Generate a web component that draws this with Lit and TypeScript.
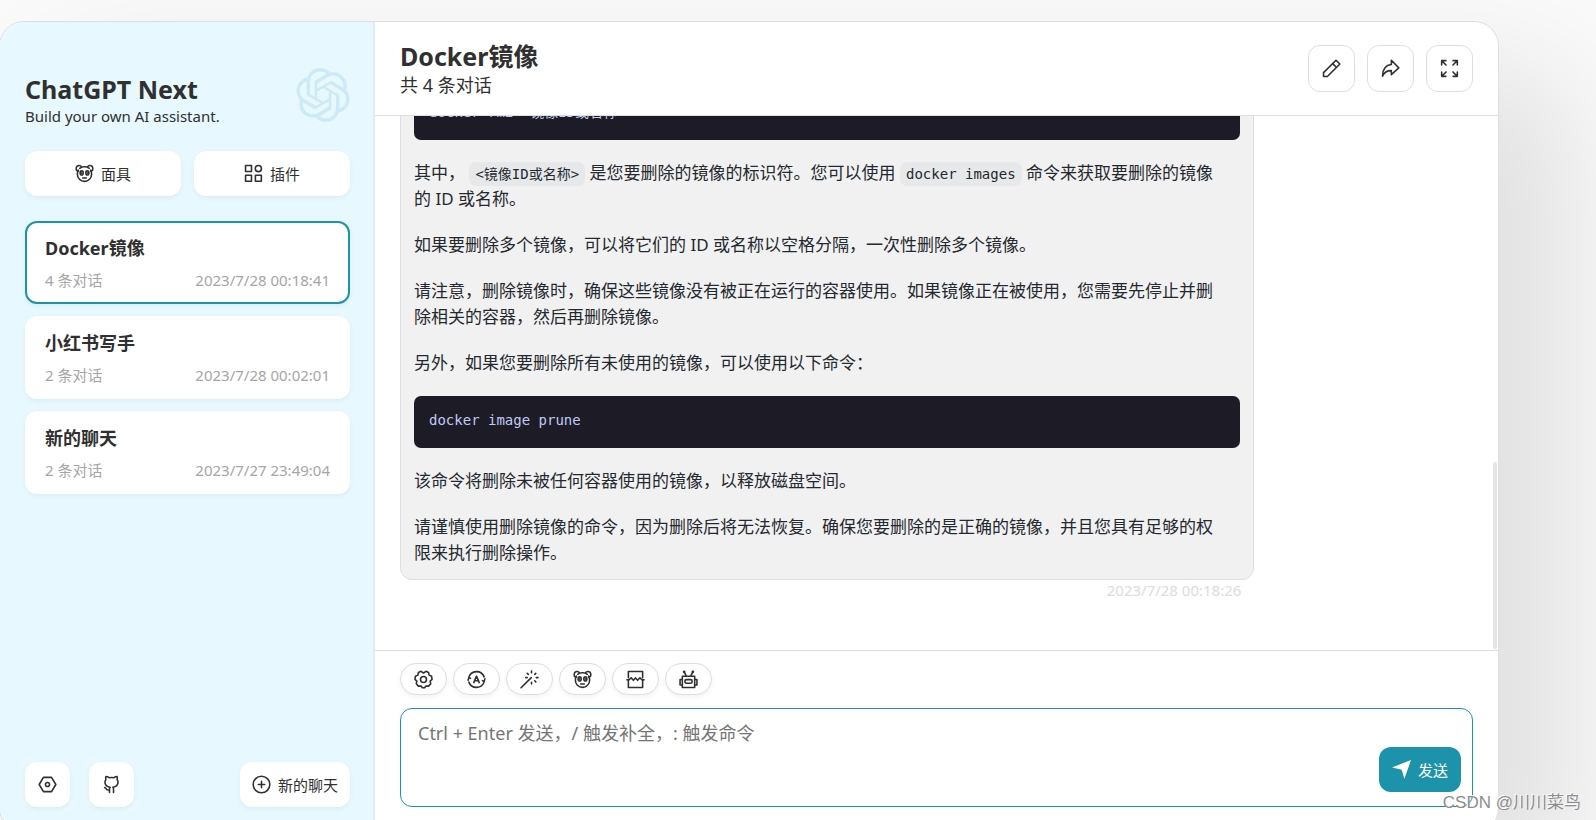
import { LitElement, html, css, svg } from "lit";
import { customElement, property } from "lit/decorators.js";
import { classMap } from "lit/directives/class-map.js";

const icons: Record<string, unknown> = {
  panda: svg`<path d="M4 3.6A5.9 5.9 0 0 1 8 2.300a5.900 5.900 0 0 1 4 1.300M2.900 5.200A6 6 0 0 0 2 8.600a6 6 0 0 0 12 0 6 6 0 0 0-.9-3.400"/><path d="M2.600 6A2.200 2.200 0 0 1 1 3.500C1.100 2 2.200 1.100 3.500 1.200c1 .1 1.600.6 2 1.300M13.400 6A2.200 2.200 0 0 0 15 3.500C14.900 2 13.800 1.100 12.500 1.200c-1 .1-1.600.6-2 1.300"/><ellipse cx="5.600" cy="7.500" rx="1.300" ry="1.700"/><ellipse cx="10.400" cy="7.500" rx="1.300" ry="1.700"/><path d="M5.700 7.500v.3M10.300 7.500v.3M6.500 11.800h3"/>`,
  plugins: svg`<rect x="1.300" y="1.300" width="5" height="5"/><circle cx="12.100" cy="3.800" r="2.600"/><rect x="1.300" y="9.500" width="5" height="5"/><rect x="9.600" y="9.500" width="5" height="5"/>`,
  settings: svg`<path d="M4.600 2h6.800L15 8l-3.600 6H4.600L1 8z"/><circle cx="8" cy="8" r="1.700"/>`,
  github: svg`<path d="M6.300 14.700v-3.100c0-.5.200-1 .6-1.300C4.300 10 2.500 8.900 2.500 6.200c0-1 .3-1.800.8-2.400-.3-.9-.3-1.700 0-2.500 1 0 1.900.4 2.700 1 1.300-.2 2.700-.2 4 0 .8-.6 1.700-1 2.700-1 .3.8.3 1.600 0 2.500.5.6.8 1.400.8 2.400 0 2.700-1.800 3.800-4.400 4.100.4.300.6.800.6 1.300v3.100M6.300 12.600c-2.300.4-2.300-.3-2.800-1.100-.3-.5-.8-.8-1.300-1"/>`,
  add: svg`<circle cx="8" cy="8" r="7"/><path d="M8 5.300v5.400M5.300 8h5.400"/>`,
  edit: svg`<path d="M1.300 14.700h3.200L15 4.200 11.800 1 1.300 11.500z"/><path d="m9 3.900 3.100 3.100"/>`,
  share: svg`<path d="M8.700 1 15 7.500 8.700 13.200v-3.400c-3.500-.2-5.700 1-7.400 4.600.1-5.400 2.200-9.200 7.400-9.700z"/>`,
  full: svg`<path d="M1.400 5V1.400H5M1.700 1.700l3.400 3.400M11 1.400h3.600V5M14.300 1.700l-3.400 3.400M14.600 11v3.600H11M14.300 14.300l-3.400-3.400M5 14.600H1.400V11M1.700 14.300l3.400-3.400"/>`,
  gear: svg`<path d="M5.900 1.100 8 2.500l2.100-1.400 2.200 1 .4 2.200 2.100.9.400 2.700L13.600 9.300l.5 2.300-1.800 2-2.200-.2-1.200 1.600H7.100l-1.200-1.600-2.200.2-1.800-2 .5-2.300L.8 7.900l.4-2.700 2.100-.9.400-2.200z"/><circle cx="8" cy="8" r="2.500"/>`,
  auto: svg`<path d="M1.500 6.200A6.800 6.800 0 0 1 14.400 5.800M14.500 9.800A6.800 6.800 0 0 1 1.600 10.200M.9 8.600l.7-2.400 1.400.9M15.100 7.400l-.7 2.400-1.400-.9"/><path d="m5.700 10.600L8 5.200l2.300 5.400M6.500 9h3"/>`,
  wand: svg`<path d="m.9 15 8.600-8.600"/><path d="M9.700.9v1.500M9.700 10.300v1.500M13.700 6.400h1.500M4.800 6.400h1.300M6.100 2.800l.9.900M12.400 9.100l.9.900M12.400 3.700l.9-.9"/>`,
  divide: svg`<path d="M2 6.500V1.300h12v5.200M2 9.500v5.200h12V9.500M.8 8.300h1.700l1.800-1.800L6.200 8.700 8 6.700l1.800 2 1.900-2.200 1.800 1.800h1.700"/>`,
  robot: svg`<rect x="2.800" y="5.300" width="10.400" height="9.400"/><rect x="5" y="8.100" width="6" height="3" rx="1.200"/><path d="M2.800 8H.9v4.600h1.900M13.200 8h1.900v4.600h-1.900M6.200 5.300 4.300 1.400M9.800 5.300l1.900-3.900"/><circle cx="4.300" cy="1.500" r=".5"/><circle cx="11.700" cy="1.500" r=".5"/>`,
  send: svg`<path class="solid" d="M0 6.300 16 0 10.400 16 8.200 8.200z"/>`,
};

@customElement("app-icon")
class AppIcon extends LitElement {
  @property() name = "";
  static styles = css`
    :host {
      display: block;
      width: 19px;
      height: 19px;
      flex: none;
    }
    .glyph {
      display: block;
      width: 100%;
      height: 100%;
      fill: none;
      stroke: currentColor;
      stroke-width: 1.33;
      stroke-linejoin: round;
      stroke-linecap: round;
    }
    .solid {
      fill: currentColor;
      stroke: none;
    }
  `;
  render() {
    return html`<svg class="glyph" viewBox="0 0 16 16" aria-hidden="true">${icons[this.name]}</svg>`;
  }
}

interface Chat {
  title: string;
  count: number;
  time: string;
  active?: boolean;
}

const chats: Chat[] = [
  { title: "Docker镜像", count: 4, time: "2023/7/28 00:18:41", active: true },
  { title: "小红书写手", count: 2, time: "2023/7/28 00:02:01" },
  { title: "新的聊天", count: 2, time: "2023/7/27 23:49:04" },
];

const tools = [
  ["gear", "对话设置"],
  ["auto", "自动主题"],
  ["wand", "快捷指令"],
  ["panda", "所有面具"],
  ["divide", "清除聊天"],
  ["robot", "模型"],
];

const headerActions = [
  ["edit", "编辑"],
  ["share", "分享"],
  ["full", "全屏"],
];

@customElement("app-root")
class AppRoot extends LitElement {
  static styles = css`
    :host {
      display: block;
      height: 100vh;
      overflow: hidden;
      position: relative;
      background: #fafafa;
      color: #303030;
      font-family: "Noto Sans", "Noto Sans CJK SC", sans-serif;
      font-size: 15px;
      line-height: 20px;
    }
    * {
      box-sizing: border-box;
    }
    button,
    textarea {
      font: inherit;
      color: inherit;
      margin: 0;
    }
    h1,
    h2,
    p,
    pre {
      margin: 0;
    }
    .window {
      display: grid;
      grid-template-columns: 375px minmax(0, 1fr);
      grid-template-rows: minmax(0, 1fr);
      height: calc(100vh - 8px);
      margin: 21px 97px 0 -1px;
      border: 1px solid #dedede;
      border-radius: 25px;
      overflow: hidden;
      background: #fff;
      box-shadow: 62px 62px 125px 12px rgba(0, 0, 0, 0.1);
    }
    .sidebar {
      display: flex;
      flex-direction: column;
      gap: 25px;
      padding: 25px;
      background: #e7f8ff;
      box-shadow: inset -2px 0 2px 0 rgba(0, 0, 0, 0.05);
    }
    .brand {
      display: flex;
      justify-content: space-between;
      padding-top: 25px;
    }
    .heading {
      font-size: 25px;
      line-height: 34px;
      font-weight: 700;
    }
    .logo {
      width: 54px;
      height: 54px;
      margin-top: -4px;
      fill: #ccebf6;
    }
    .button {
      display: flex;
      align-items: center;
      justify-content: center;
      gap: 7px;
      height: 45px;
      padding: 0 12px;
      border: 0;
      border-radius: 12px;
      background: #fff;
      box-shadow: 0 2px 5px rgba(0, 0, 0, 0.05);
    }
    .shortcuts {
      display: grid;
      grid-template-columns: 1fr 1fr;
      gap: 13px;
    }
    .chats {
      display: flex;
      flex-direction: column;
      gap: 12px;
      flex: 1;
    }
    .chat {
      display: flex;
      flex-direction: column;
      gap: 9px;
      padding: 12px 18px;
      border: 2px solid transparent;
      border-radius: 12px;
      background: #fff;
      box-shadow: 0 2px 5px rgba(0, 0, 0, 0.05);
      text-align: left;
    }
    .chat.active {
      border-color: #1d93ab;
    }
    .name {
      font-size: 18px;
      line-height: 26px;
      font-weight: 700;
    }
    .info {
      display: flex;
      justify-content: space-between;
      color: #a6a6a6;
    }
    .tail {
      display: flex;
      gap: 19px;
    }
    .square {
      width: 45px;
      color: inherit;
    }
    .new {
      margin-left: auto;
    }
    .main {
      display: flex;
      flex-direction: column;
      min-width: 0;
      min-height: 0;
    }
    .top {
      display: flex;
      align-items: center;
      justify-content: space-between;
      padding: 17px 25px;
      border-bottom: 1px solid #dedede;
    }
    .sub {
      font-size: 18px;
      line-height: 25px;
    }
    .actions {
      display: flex;
      gap: 12px;
    }
    .outlined {
      width: 47px;
      height: 47px;
      border: 1px solid #dedede;
      box-shadow: none;
    }
    .body {
      position: relative;
      flex: 1;
      min-height: 0;
      display: flex;
      flex-direction: column;
      justify-content: flex-end;
      overflow: hidden;
      padding: 0 30px 50px 25px;
    }
    .thumb {
      position: absolute;
      right: 1px;
      bottom: 1px;
      width: 4px;
      height: 35%;
      border-radius: 2px;
      background: #e5e5e5;
    }
    .message {
      width: 80%;
      flex: none;
      display: flex;
      flex-direction: column;
    }
    .bubble {
      display: flex;
      flex-direction: column;
      gap: 20px;
      padding: 13px;
      border: 1px solid #dedede;
      border-radius: 12px;
      background: #f1f1f1;
      color: #24292f;
      font-size: 17px;
      line-height: 26px;
    }
    .bubble p {
      padding-right: 16px;
    }
    .block {
      padding: 12px 15px 15px;
      border-radius: 7px;
      background: #1c1b26;
      color: #c0caf5;
      font-family: "DejaVu Sans Mono", "Noto Sans CJK SC", monospace;
      font-size: 14px;
      line-height: 25px;
    }
    .block code {
      font: inherit;
    }
    .inline {
      padding: 4px 6px;
      border-radius: 7px;
      background: #e6e8ea;
      font-family: "DejaVu Sans Mono", "Noto Sans CJK SC", monospace;
      font-size: 14px;
      line-height: 17px;
    }
    .date {
      align-self: flex-end;
      padding-right: 13px;
      color: #dcdcdc;
    }
    .panel {
      display: flex;
      flex-direction: column;
      gap: 13px;
      padding: 12px 25px 25px;
      border-top: 1px solid #dedede;
    }
    .tools {
      display: flex;
      gap: 6px;
    }
    .pill {
      width: 47px;
      height: 32px;
      border: 1px solid #dedede;
      border-radius: 16px;
    }
    .composer {
      position: relative;
      display: grid;
    }
    .input {
      height: 99px;
      padding: 12px 112px 12px 17px;
      border: 1px solid #1d93ab;
      border-radius: 12px;
      background: #fff;
      resize: none;
      outline: none;
      font-size: 18px;
      line-height: 25px;
      box-shadow: 0 -2px 5px rgba(0, 0, 0, 0.03);
    }
    .input::placeholder {
      color: #757575;
    }
    .send {
      position: absolute;
      right: 12px;
      bottom: 15px;
      width: 82px;
      background: #1d93ab;
      color: #fff;
      box-shadow: none;
    }
    .mark {
      position: absolute;
      right: 15px;
      bottom: 5px;
      color: #8e8e8e;
      font-family: "Liberation Sans", "Noto Sans CJK SC", sans-serif;
      font-size: 17px;
      line-height: 25px;
      text-shadow: -1px -1px 0 #fff;
    }
  `;

  render() {
    return html`
      <div class="window">
        <aside class="sidebar">
          <header class="brand">
            <div>
              <h1 class="heading">ChatGPT Next</h1>
              <p>Build your own AI assistant.</p>
            </div>
            <svg class="logo" viewBox="0 0 24 24" aria-hidden="true">
              <path
                d="M22.2819 9.8211a5.9847 5.9847 0 0 0-.5157-4.9108 6.0462 6.0462 0 0 0-6.5098-2.9A6.0651 6.0651 0 0 0 4.9807 4.1818a5.9847 5.9847 0 0 0-3.9977 2.9 6.0462 6.0462 0 0 0 .7427 7.0966 5.98 5.98 0 0 0 .511 4.9107 6.051 6.051 0 0 0 6.5146 2.9001A5.9847 5.9847 0 0 0 13.2599 24a6.0557 6.0557 0 0 0 5.7718-4.2058 5.9894 5.9894 0 0 0 3.9977-2.9001 6.0557 6.0557 0 0 0-.7475-7.0729zm-9.022 12.6081a4.4755 4.4755 0 0 1-2.8764-1.0408l.1419-.0804 4.7783-2.7582a.7948.7948 0 0 0 .3927-.6813v-6.7369l2.02 1.1686a.071.071 0 0 1 .038.052v5.5826a4.504 4.504 0 0 1-4.4945 4.4944zm-9.6607-4.1254a4.4708 4.4708 0 0 1-.5346-3.0137l.142.0852 4.783 2.7582a.7712.7712 0 0 0 .7806 0l5.8428-3.3685v2.3324a.0804.0804 0 0 1-.0332.0615L9.74 19.9502a4.4992 4.4992 0 0 1-6.1408-1.6464zM2.3408 7.8956a4.485 4.485 0 0 1 2.3655-1.9728V11.6a.7664.7664 0 0 0 .3879.6765l5.8144 3.3543-2.0201 1.1685a.0757.0757 0 0 1-.071 0l-4.8303-2.7865A4.504 4.504 0 0 1 2.3408 7.872zm16.5963 3.8558L13.1038 8.364 15.1192 7.2a.0757.0757 0 0 1 .071 0l4.8303 2.7913a4.4944 4.4944 0 0 1-.6765 8.1042v-5.6772a.79.79 0 0 0-.407-.667zm2.0107-3.0231l-.142-.0852-4.7735-2.7818a.7759.7759 0 0 0-.7854 0L9.409 9.2297V6.8974a.0662.0662 0 0 1 .0284-.0615l4.8303-2.7866a4.4992 4.4992 0 0 1 6.6802 4.66zM8.3065 12.863l-2.02-1.1638a.0804.0804 0 0 1-.038-.0567V6.0742a4.4992 4.4992 0 0 1 7.3757-3.4537l-.142.0805L8.704 5.459a.7948.7948 0 0 0-.3927.6813zm1.0976-2.3654l2.602-1.4998 2.6069 1.4998v2.9994l-2.5974 1.4997-2.6067-1.4997Z"
              />
            </svg>
          </header>
          <nav class="shortcuts">
            <button class="button"><app-icon name="panda"></app-icon>面具</button>
            <button class="button"><app-icon name="plugins"></app-icon>插件</button>
          </nav>
          <div class="chats">
            ${chats.map(
              (c) => html`<button class=${classMap({ chat: true, active: !!c.active })}>
                <span class="name">${c.title}</span>
                <span class="info"><span>${c.count} 条对话</span><span>${c.time}</span></span>
              </button>`
            )}
          </div>
          <footer class="tail">
            <button class="button square" aria-label="设置"><app-icon name="settings"></app-icon></button>
            <a class="button square" href="#github" aria-label="GitHub"><app-icon name="github"></app-icon></a>
            <button class="button new"><app-icon name="add"></app-icon>新的聊天</button>
          </footer>
        </aside>
        <main class="main">
          <header class="top">
            <div>
              <h2 class="heading">Docker镜像</h2>
              <p class="sub">共 4 条对话</p>
            </div>
            <div class="actions">
              ${headerActions.map(
                ([icon, label]) =>
                  html`<button class="button outlined" aria-label=${label}><app-icon name=${icon}></app-icon></button>`
              )}
            </div>
          </header>
          <section class="body">
            <article class="message">
              <div class="bubble">
                <pre class="block"><code>docker rmi &lt;镜像ID或名称&gt;</code></pre>
                <p>其中， <code class="inline">&lt;镜像ID或名称&gt;</code> 是您要删除的镜像的标识符。您可以使用 <code class="inline">docker images</code> 命令来获取要删除的镜像的 ID 或名称。</p>
                <p>如果要删除多个镜像，可以将它们的 ID 或名称以空格分隔，一次性删除多个镜像。</p>
                <p>请注意，删除镜像时，确保这些镜像没有被正在运行的容器使用。如果镜像正在被使用，您需要先停止并删除相关的容器，然后再删除镜像。</p>
                <p>另外，如果您要删除所有未使用的镜像，可以使用以下命令：</p>
                <pre class="block"><code>docker image prune</code></pre>
                <p>该命令将删除未被任何容器使用的镜像，以释放磁盘空间。</p>
                <p>请谨慎使用删除镜像的命令，因为删除后将无法恢复。确保您要删除的是正确的镜像，并且您具有足够的权限来执行删除操作。</p>
              </div>
              <time class="date">2023/7/28 00:18:26</time>
            </article>
            <div class="thumb"></div>
          </section>
          <section class="panel">
            <div class="tools">
              ${tools.map(
                ([icon, label]) =>
                  html`<button class="button pill" aria-label=${label}><app-icon name=${icon}></app-icon></button>`
              )}
            </div>
            <div class="composer">
              <textarea
                class="input"
                aria-label="消息"
                placeholder="Ctrl + Enter 发送，/ 触发补全，: 触发命令"
              ></textarea>
              <button class="button send"><app-icon name="send"></app-icon>发送</button>
            </div>
          </section>
        </main>
      </div>
      <div class="mark">CSDN @川川菜鸟</div>
    `;
  }
}
